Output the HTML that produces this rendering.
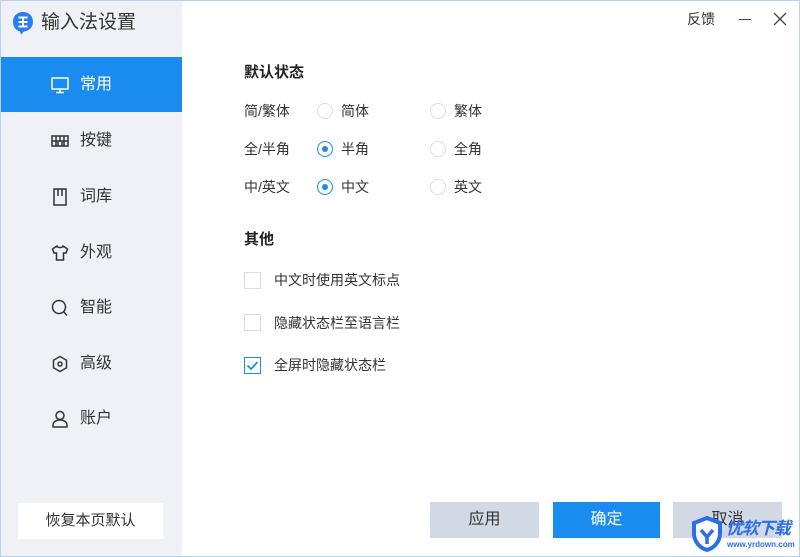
<!DOCTYPE html>
<html><head><meta charset="utf-8"><style>
*{margin:0;padding:0;box-sizing:border-box}
body{width:800px;height:557px;position:relative;background:#fff;font-family:"Liberation Sans","Noto Sans CJK SC",sans-serif;color:#333;overflow:hidden}
.frame{position:absolute;left:0;top:0;width:800px;height:557px;border:1px solid #b3d3f2}
.side{position:absolute;left:1px;top:1px;width:181px;height:555px;background:#eff1f6}
.abs{position:absolute;white-space:nowrap}
.nav{position:absolute;left:1px;width:181px;height:55px;font-size:16px;line-height:55px}
.nav span{position:absolute;left:79px}
.nav svg{position:absolute;left:50px;top:19px}
.act{background:#1a8cf0;color:#fff}
.t{font-size:14px;position:absolute;line-height:20px;white-space:nowrap}
.radio{position:absolute;width:16px;height:16px;border:1px solid #d8dde6;border-radius:50%;background:#fff}
.radio.on{border:1.5px solid #1a8cf0}
.radio.on:after{content:"";position:absolute;left:3.5px;top:3.5px;width:6px;height:6px;border-radius:50%;background:#1a8cf0}
.cb{position:absolute;left:244px;width:17px;height:17px;border:1px solid #d8dde6;background:#fff}
.btn{position:absolute;top:502px;height:36px;font-size:16px;text-align:center;line-height:36px}
</style></head><body>
<div class="frame"></div>
<div class="side"></div>
<svg class="abs" style="left:12px;top:11px" width="22" height="24" viewBox="0 0 22 24"><path d="M11 1C5 1 1 5 1 11c0 5 3 8.5 7 9.5l1 3 3-3c5-.5 9-4.5 9-9.5C21 5 17 1 11 1z" fill="#2b7cf0"/><path d="M6.5 6.5h9M6.5 11h9M6.5 15.5h9M11 6.5v9" stroke="#fff" stroke-width="2"/></svg>
<div class="abs" style="left:41px;top:10px;font-size:19px;color:#333;line-height:26px">输入法设置</div>

<div class="nav act" style="top:57px"><svg width="18" height="18" viewBox="0 0 18 18" fill="none" stroke="#fff" stroke-width="1.5"><rect x="1" y="2" width="16" height="11"/><path d="M9 13v3M5 16.5h8"/></svg><span>常用</span></div>
<div class="nav" style="top:113px"><svg width="18" height="18" viewBox="0 0 18 18" fill="none" stroke="#333" stroke-width="1.5"><rect x="1" y="4" width="16" height="10"/><path d="M1 9h16M5 4v10M9 4v5M13 4v10M7 9v5M11 9v5"/></svg><span>按键</span></div>
<div class="nav" style="top:169px"><svg width="18" height="18" viewBox="0 0 18 18" fill="none" stroke="#333" stroke-width="1.5"><rect x="3" y="1" width="12" height="16"/><path d="M7 1v7M11 1v7"/></svg><span>词库</span></div>
<div class="nav" style="top:225px"><svg width="18" height="18" viewBox="0 0 18 18" fill="none" stroke="#333" stroke-width="1.5"><path d="M6 2L1.5 5 3 9h2.5v7h7V9H15l1.5-4L12 2c-.5 2-5.5 2-6 0z"/></svg><span>外观</span></div>
<div class="nav" style="top:280px"><svg width="18" height="18" viewBox="0 0 18 18" fill="none" stroke="#333" stroke-width="1.5"><circle cx="8" cy="8" r="6.5"/><path d="M12.5 12.5L16 16.5"/></svg><span>智能</span></div>
<div class="nav" style="top:336px"><svg width="18" height="18" viewBox="0 0 18 18" fill="none" stroke="#333" stroke-width="1.5"><path d="M9 1.5l6.5 3.75v7.5L9 16.5l-6.5-3.75v-7.5z"/><circle cx="9" cy="9" r="2"/></svg><span>高级</span></div>
<div class="nav" style="top:391px"><svg width="18" height="18" viewBox="0 0 18 18" fill="none" stroke="#333" stroke-width="1.5"><circle cx="9" cy="5.5" r="4"/><path d="M2 17v-2c0-3 3-5 7-5s7 2 7 5v2z"/></svg><span>账户</span></div>

<div class="abs" style="left:18px;top:503px;width:145px;height:36px;background:#fff;font-size:15px;text-align:center;line-height:36px;color:#333">恢复本页默认</div>

<div class="abs" style="left:687px;top:9px;font-size:14px;line-height:20px">反馈</div>
<div class="abs" style="left:739px;top:19px;width:12px;height:1px;background:#444"></div>
<svg class="abs" style="left:773px;top:12px" width="14" height="14"><path d="M1 1l12 12M13 1L1 13" stroke="#444" stroke-width="1.3"/></svg>

<div class="t" style="left:244px;top:63px;font-size:15px;font-weight:bold;color:#222">默认状态</div>
<div class="t" style="left:244px;top:101px">简/繁体</div>
<div class="radio" style="left:317px;top:103px"></div><div class="t" style="left:341px;top:101px">简体</div>
<div class="radio" style="left:430px;top:103px"></div><div class="t" style="left:454px;top:101px">繁体</div>
<div class="t" style="left:244px;top:139px">全/半角</div>
<div class="radio on" style="left:317px;top:141px"></div><div class="t" style="left:341px;top:139px">半角</div>
<div class="radio" style="left:430px;top:141px"></div><div class="t" style="left:454px;top:139px">全角</div>
<div class="t" style="left:244px;top:177px">中/英文</div>
<div class="radio on" style="left:317px;top:179px"></div><div class="t" style="left:341px;top:177px">中文</div>
<div class="radio" style="left:430px;top:179px"></div><div class="t" style="left:454px;top:177px">英文</div>

<div class="t" style="left:244px;top:230px;font-size:15px;font-weight:bold;color:#222">其他</div>
<div class="cb" style="top:272px"></div><div class="t" style="left:274px;top:270px">中文时使用英文标点</div>
<div class="cb" style="top:314px"></div><div class="t" style="left:274px;top:313px">隐藏状态栏至语言栏</div>
<div class="cb" style="top:357px;border-color:#1a8cf0"><svg width="15" height="15" style="position:absolute;left:0;top:0"><path d="M2.5 7.5l3.5 3.5 6.5-7" fill="none" stroke="#1a8cf0" stroke-width="1.8"/></svg></div>
<div class="t" style="left:274px;top:355px">全屏时隐藏状态栏</div>

<div class="btn" style="left:430px;width:109px;background:#d3d9e4;color:#333">应用</div>
<div class="btn" style="left:553px;width:107px;background:#1a8cf0;color:#fff">确定</div>
<div class="btn" style="left:673px;width:109px;background:#d3d9e4;color:#333">取消</div>

<svg class="abs" style="left:690px;top:516px" width="34" height="36" viewBox="0 0 34 36"><path d="M17 2L4 7v10c0 9 6 15 13 17 7-2 13-8 13-17V7z" fill="#fff" stroke="#2a6ee8" stroke-width="4"/><path d="M11 14l6 7 6-7M17 21v7" fill="none" stroke="#2a6ee8" stroke-width="3.5"/></svg>
<div class="abs" style="left:726px;top:519px;font-size:17px;font-weight:bold;font-style:italic;color:#2a6ee8;line-height:20px;letter-spacing:-1px">优软下载</div>
<div class="abs" style="left:727px;top:540px;font-size:8px;font-weight:bold;color:#2a6ee8;line-height:10px">www.yrdown.com</div>
</body></html>
